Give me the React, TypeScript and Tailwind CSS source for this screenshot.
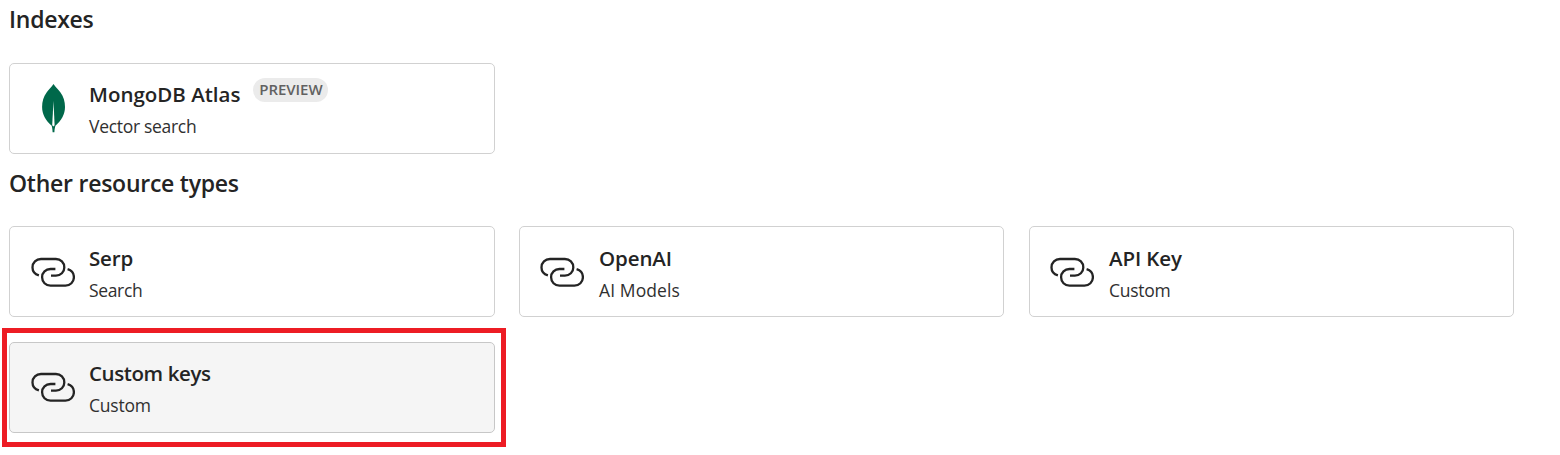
import type { ReactNode } from 'react';

interface Resource {
  name: string;
  kind: string;
  nameClass: string;
  kindClass: string;
  iconClass?: string;
}

const resources: Resource[] = [
  { name: 'Serp', kind: 'Search', nameClass: 'tracking-[-0.15px]', kindClass: 'tracking-[-0.35px]' },
  { name: 'OpenAI', kind: 'AI Models', nameClass: 'tracking-[-0.1px]', kindClass: 'tracking-[0.1px]', iconClass: '-ml-px' },
  { name: 'API Key', kind: 'Custom', nameClass: 'tracking-[-0.1px]', kindClass: 'tracking-[-0.25px]', iconClass: '-ml-px' },
];

function LinkIcon({ className }: { className?: string }) {
  return (
    <svg className={className} width="44" height="31" viewBox="0 0 44 31" fill="none" stroke="#242424" strokeWidth="2.3" strokeLinecap="butt">
      <path d="M7.9 18.4C4 17.2 1.5 14.3 1.5 10.4C1.5 5.6 5.2 2 10 2H24.9C29.7 2 33.3 5.6 33.3 10.4C33.3 15.1 29.7 18.6 24.9 18.6H20" />
      <path d="M36.6 12.2C40.4 13.4 42.9 16.3 42.9 20.2C42.9 25 39.2 28.6 34.4 28.6H19.5C14.7 28.6 11.1 25 11.1 20.2C11.1 15.5 14.7 12 19.5 12H24.4" />
    </svg>
  );
}

function LeafIcon() {
  return (
    <svg width="24" height="49" viewBox="0 0 24 49">
      <path fill="#00684a" d="M11.5 0C13.6 3.3 16.2 5.5 18.5 8.5C21.6 12.6 23 17.8 23 23C23 30.4 19.4 36.6 13.4 41.8C12.9 43.6 12.5 45.6 12.4 48.2H10.6C10.5 45.6 10.2 43.6 9.7 41.8C3.8 36.6 0.1 30.4 0.1 23C0.1 17.8 1.5 12.6 4.6 8.5C6.9 5.5 9.4 3.3 11.5 0Z" />
      <path fill="#fff" d="M11.5 17L12.6 41.2L11.5 42.6L10.2 41.2Z" />
    </svg>
  );
}

interface CardProps extends Resource {
  icon: ReactNode;
  badge?: ReactNode;
  className: string;
}

function Card({ name, kind, nameClass, kindClass, icon, badge, className }: CardProps) {
  return (
    <div className={`flex h-[91px] items-center rounded-[5px] border pl-[21px] ${className}`}>
      <div className="flex w-[58px] shrink-0">{icon}</div>
      <div className="flex flex-col gap-1.5">
        <div className="flex h-7 items-center gap-[13px]">
          <span className={`text-[20.5px] leading-7 font-semibold ${nameClass}`}>{name}</span>
          {badge}
        </div>
        <div className={`text-[17.5px] leading-6 text-[#303030] ${kindClass}`}>{kind}</div>
      </div>
    </div>
  );
}

export default function App() {
  return (
    <main className="h-[455px] w-[1560px] bg-white pt-[3px] pl-[9px] font-['Open_Sans',sans-serif] text-[#242424]">
      <h2 className="text-[23px] leading-8 font-semibold tracking-[-0.25px]">Indexes</h2>
      <div className="mt-7 w-[486px]">
        <Card
          className="border-[#d1d1d1] bg-white"
          name="MongoDB Atlas"
          kind="Vector search"
          nameClass="tracking-normal"
          kindClass="tracking-[-0.3px]"
          icon={<div className="-mt-px ml-[11px]"><LeafIcon /></div>}
          badge={
            <span className="mb-2 flex h-6 w-[75px] items-center justify-center rounded-full bg-[#ebebeb] text-[15px] font-semibold tracking-[-0.05px] text-[#616161]">
              PREVIEW
            </span>
          }
        />
      </div>
      <h2 className="mt-[13px] text-[23px] leading-8 font-semibold tracking-[-0.25px]">Other resource types</h2>
      <div className="mt-[27px] grid grid-cols-[486px_486px_485px] gap-x-6">
        {resources.map((r, i) => (
          <Card
            key={r.name}
            {...r}
            className={i === 1 ? 'mr-px -ml-0 border-[#d1d1d1] bg-white pt-0.5' : 'border-[#d1d1d1] bg-white pt-0.5'}
            icon={<LinkIcon className={r.iconClass} />}
          />
        ))}
      </div>
      <div className="mt-[11px] -ml-[7px] h-[119px] w-[504px] border-[5px] border-[#ed1c24] pt-[9px] pr-[6px] pl-[2px]">
        <Card
          className="border-[#c7c7c7] bg-[#f5f5f5]"
          name="Custom keys"
          kind="Custom"
          nameClass="tracking-[-0.4px]"
          kindClass="tracking-[-0.2px]"
          icon={<LinkIcon />}
        />
      </div>
    </main>
  );
}
